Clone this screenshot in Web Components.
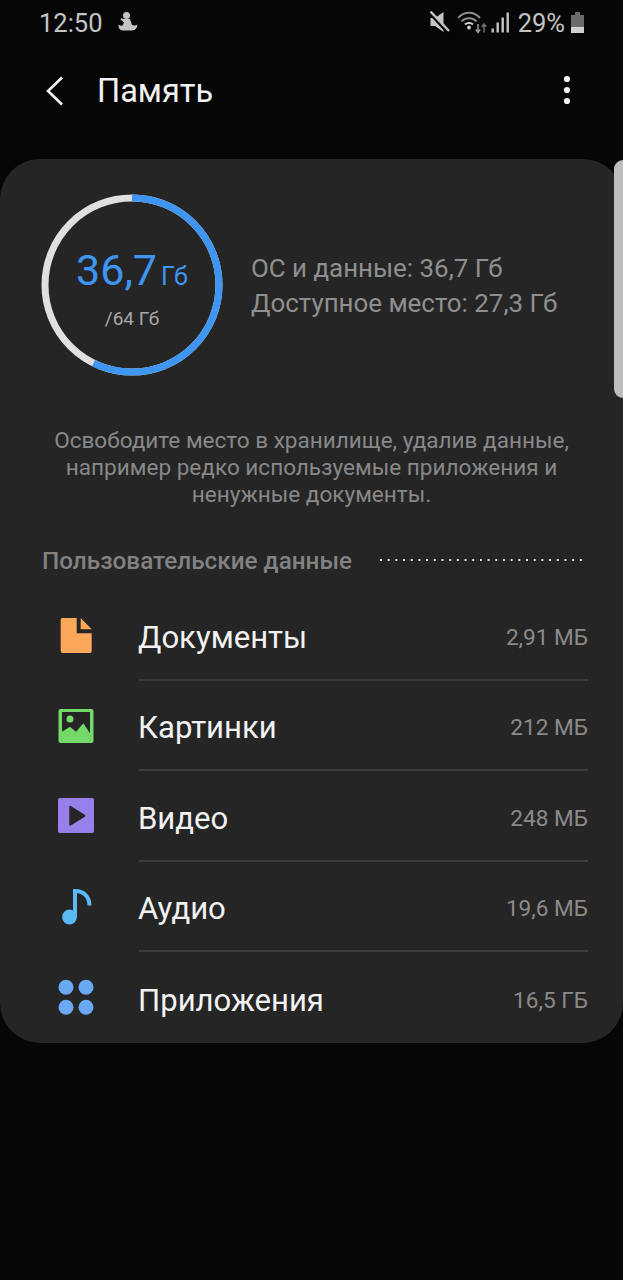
<!DOCTYPE html>
<html lang="ru">
<head>
<meta charset="utf-8">
<title>Память</title>
<style>
  html, body { margin: 0; padding: 0; background: #060606; }
  body { width: 623px; height: 1280px; overflow: hidden; font-family: Roboto, "Noto Sans", sans-serif; position: relative; }
</style>
</head>
<body>
<status-bar></status-bar>
<app-toolbar title="Память"></app-toolbar>
<storage-card>
  <storage-row label="Документы" size="2,91 МБ">
    <svg slot="icon" width="40" height="40" viewBox="0 0 40 40"><path d="M4.700 3.500q0-1.500 1.500-1.500H20.700V17.300H35.700V35q0 2-2 2H6.700q-2 0-2-2Z" fill="#fba85b"/><path d="M24.700 2 35.700 13.300H24.700Z" fill="#fba85b"/></svg>
  </storage-row>
  <storage-row label="Картинки" size="212 МБ">
    <svg slot="icon" width="40" height="40" viewBox="0 0 40 40"><path fill-rule="evenodd" d="M4.500 2H35.500q2 0 2 2V34q0 2-2 2H4.500q-2 0-2-2V4q0-2 2-2ZM6 5V24.700L14 19.700 20 24.700 27.300 16.300 34 26.300V5Z" fill="#74d968"/><circle cx="14" cy="12" r="3.500" fill="#74d968"/></svg>
  </storage-row>
  <storage-row label="Видео" size="248 МБ">
    <svg slot="icon" width="40" height="40" viewBox="0 0 40 40"><path fill-rule="evenodd" d="M4 1H36q2 0 2 2V34q0 2-2 2H4q-2 0-2-2V3q0-2 2-2ZM13.300 9.800V27.800Q13.300 29.300 14.800 28.500L28.800 19.800Q30.300 18.800 28.800 17.800L14.800 9.100Q13.300 8.300 13.300 9.800Z" fill="#9880ea"/></svg>
  </storage-row>
  <storage-row label="Аудио" size="19,6 МБ">
    <svg slot="icon" width="40" height="40" viewBox="0 0 40 40"><circle cx="13.500" cy="29" r="7.400" fill="#5bb9f5"/><path d="M19 29V3C28 3 33.500 9 33.500 17.500" fill="none" stroke="#5bb9f5" stroke-width="4"/></svg>
  </storage-row>
  <storage-row label="Приложения" size="16,5 ГБ" last>
    <svg slot="icon" width="40" height="40" viewBox="0 0 40 40"><g fill="#6aa9f3"><circle cx="10" cy="9.300" r="7.500"/><circle cx="30" cy="9.300" r="7.500"/><circle cx="10" cy="29.300" r="7.500"/><circle cx="30" cy="29.300" r="7.500"/></g></svg>
  </storage-row>
</storage-card>
<script>
class StatusBar extends HTMLElement {
	constructor() {
		super();
		this.attachShadow({ mode: 'open' });
	}
	connectedCallback() {
		this.shadowRoot.innerHTML = `
			<style>
				:host { display: flex; align-items: center; height: 45px; padding: 0 38px 0 39px; color: #c4c4c4; font-size: 25.500px; }
				.spacer { flex: 1; }
				svg { display: block; }
				.man { margin-left: 11px; }
				.mute { margin-right: 6px; }
				.wifi { margin-right: 4px; }
				.pct { margin: 0 5px 0 9px; }
			</style>
			<span class="time">12:50</span>
			<svg class="man" width="25" height="24" viewBox="0 0 25 24"><g fill="#c4c4c4"><circle cx="12.500" cy="4.500" r="3.500"/><path d="M9 8H16L18 14Q21 15 23.500 13.500Q23 19 18 19.500H9Q4 19 4.500 13.500Q6 15 8.500 14.500L10 11.500 6.500 8.500 7.500 7Z"/></g></svg>
			<span class="spacer"></span>
			<svg class="mute" width="22" height="24" viewBox="0 0 22 24"><path d="M0.500 7H5L13.500 1V21L5 15H0.500Z" fill="#c4c4c4"/><path d="M0.500 2.500 19 22.500" stroke="#060606" stroke-width="3.500"/><path d="M0.500 0.500 19 20" stroke="#c4c4c4" stroke-width="2.400"/></svg>
			<svg class="wifi" width="29" height="24" viewBox="0 0 29 24"><g fill="none" stroke="#8e8e8e" stroke-width="2"><path d="M0 7C6 0 16 0 22 7"/><path d="M3.500 10.500C7 6 15 6 18.500 10.500"/></g><path d="M7 13.500C9 11.500 13 11.500 15 13.500" fill="none" stroke="#d0d0d0" stroke-width="2"/><circle cx="11" cy="16.500" r="1.900" fill="#d0d0d0"/><path d="M20 13v8M17.800 18.500 20 21.500l2.200-3" fill="none" stroke="#9a9a9a" stroke-width="1.500"/><path d="M26 21.500v-8M23.800 16 26 13l2.200 3" fill="none" stroke="#6f6f6f" stroke-width="1.500"/></svg>
			<svg width="18" height="24" viewBox="0 0 18 24"><g fill="#c4c4c4"><rect x="0.500" y="17.500" width="2.400" height="4"/><rect x="5.500" y="11.500" width="2.400" height="10"/><rect x="10.500" y="6.500" width="2.400" height="15"/><rect x="15.500" y="1.500" width="2.400" height="20"/></g></svg>
			<span class="pct">29%</span>
			<svg width="15" height="24" viewBox="0 0 15 24"><rect x="5" y="1" width="5" height="3" fill="#6b6b6b"/><rect x="1" y="4" width="13" height="12" fill="#6b6b6b"/><rect x="1" y="16" width="13" height="6" fill="#d0d0d0"/></svg>
		`;
	}
}
customElements.define('status-bar', StatusBar);

class AppToolbar extends HTMLElement {
	constructor() {
		super();
		this.attachShadow({ mode: 'open' });
	}
	connectedCallback() {
		this.shadowRoot.innerHTML = `
			<style>
				:host { display: flex; align-items: center; height: 92px; padding: 0 52px 0 46px; color: #f2f2f2; font-size: 32.500px; }
				.title { margin-left: 33px; flex: 1; }
				svg { display: block; }
				.back { margin-top: -1px; }
				.more { margin-top: -2px; }
			</style>
			<svg class="back" width="18" height="30" viewBox="0 0 18 30"><path d="M16 1.500 2 15l14 13.500" fill="none" stroke="#f2f2f2" stroke-width="2.600"/></svg>
			<span class="title">${this.getAttribute('title')}</span>
			<svg class="more" width="8" height="30" viewBox="0 0 8 30"><g fill="#f2f2f2"><circle cx="4" cy="4" r="3.100"/><circle cx="4" cy="15" r="3.100"/><circle cx="4" cy="26" r="3.100"/></g></svg>
		`;
	}
}
customElements.define('app-toolbar', AppToolbar);

class UsageRing extends HTMLElement {
	constructor() {
		super();
		this.attachShadow({ mode: 'open' });
	}
	connectedCallback() {
		this.shadowRoot.innerHTML = `
			<style>
				:host { display: block; position: relative; width: 184px; height: 184px; flex: none; }
				svg { display: block; }
				.center { position: absolute; inset: 0; display: flex; flex-direction: column; align-items: center; }
				.value { margin-top: 50px; color: #3e95f2; font-size: 43px; line-height: 54px; white-space: nowrap; }
				.value small { font-size: 25px; margin-left: 4px; }
				.total { margin-top: 3px; color: #a8a8a8; font-size: 19px; line-height: 24px; }
			</style>
			<svg width="184" height="184" viewBox="0 0 184 184">
				<circle cx="92" cy="92" r="87" fill="none" stroke="#e0e0e0" stroke-width="7"/>
				<circle cx="92" cy="92" r="87" fill="none" stroke="#3e95f2" stroke-width="7" pathLength="100" stroke-dasharray="57.300 100" transform="rotate(-90 92 92)"/>
			</svg>
			<div class="center">
				<div class="value">36,7<small>Гб</small></div>
				<div class="total">/64 Гб</div>
			</div>
		`;
	}
}
customElements.define('usage-ring', UsageRing);

class StorageCard extends HTMLElement {
	constructor() {
		super();
		this.attachShadow({ mode: 'open' });
	}
	connectedCallback() {
		this.shadowRoot.innerHTML = `
			<style>
				:host { display: block; position: relative; margin-top: 22px; height: 884px; box-sizing: border-box; background: #252525; border-radius: 40px; padding-top: 34px; color: #fff; }
				.top { display: flex; align-items: center; padding-left: 40px; }
				.stats { margin: 2px 0 0 27px; color: #8f8f8f; font-size: 25.900px; line-height: 35px; white-space: nowrap; }
				.hint { margin: 50px 0 0; text-align: center; color: #888; font-size: 22.550px; line-height: 27px; white-space: nowrap; }
				.head { display: flex; align-items: center; margin: 34px 0 0 42px; height: 36px; }
				.head span { color: #828282; font-size: 24.300px; font-weight: 500; white-space: nowrap; }
				.dots { flex: none; width: 206px; height: 2px; margin-left: 28px; background: radial-gradient(circle at 1px 1px, #e4e4e4 1.100px, transparent 1.300px) 0 0 / 7.700px 2px repeat-x; }
				.rows { margin-top: 12px; }
				.thumb { position: absolute; top: 1px; right: 0; width: 9px; height: 238px; background: #bdbdbd; border-radius: 9px 0 0 9px; }
			</style>
			<div class="top">
				<usage-ring></usage-ring>
				<div class="stats">ОС и данные: 36,7 Гб<br>Доступное место: 27,3 Гб</div>
			</div>
			<p class="hint">Освободите место в хранилище, удалив данные,<br>например редко используемые приложения и<br>ненужные документы.</p>
			<div class="head"><span>Пользовательские данные</span><div class="dots"></div></div>
			<div class="rows"><slot></slot></div>
			<div class="thumb"></div>
		`;
	}
}
customElements.define('storage-card', StorageCard);

class StorageRow extends HTMLElement {
	constructor() {
		super();
		this.attachShadow({ mode: 'open' });
	}
	connectedCallback() {
		const border = this.hasAttribute('last') ? '0' : '2px solid #3c3c3c';
		this.shadowRoot.innerHTML = `
			<style>
				:host { display: flex; align-items: stretch; height: 90.500px; padding: 0 35px 0 56px; }
				.icon { width: 40px; flex: none; margin: 2px 43px 0 0; align-self: center; height: 40px; }
				.body { flex: 1; display: flex; align-items: center; justify-content: space-between; box-sizing: border-box; padding-top: 6px; border-bottom: ${border}; }
				.label { margin-left: -1px; color: #f2f2f2; font-size: 31.100px; }
				.size { color: #8a8a8a; font-size: 22.600px; }
			</style>
			<div class="icon"><slot name="icon"></slot></div>
			<div class="body">
				<span class="label">${this.getAttribute('label')}</span>
				<span class="size">${this.getAttribute('size')}</span>
			</div>
		`;
	}
}
customElements.define('storage-row', StorageRow);
</script>
</body>
</html>
